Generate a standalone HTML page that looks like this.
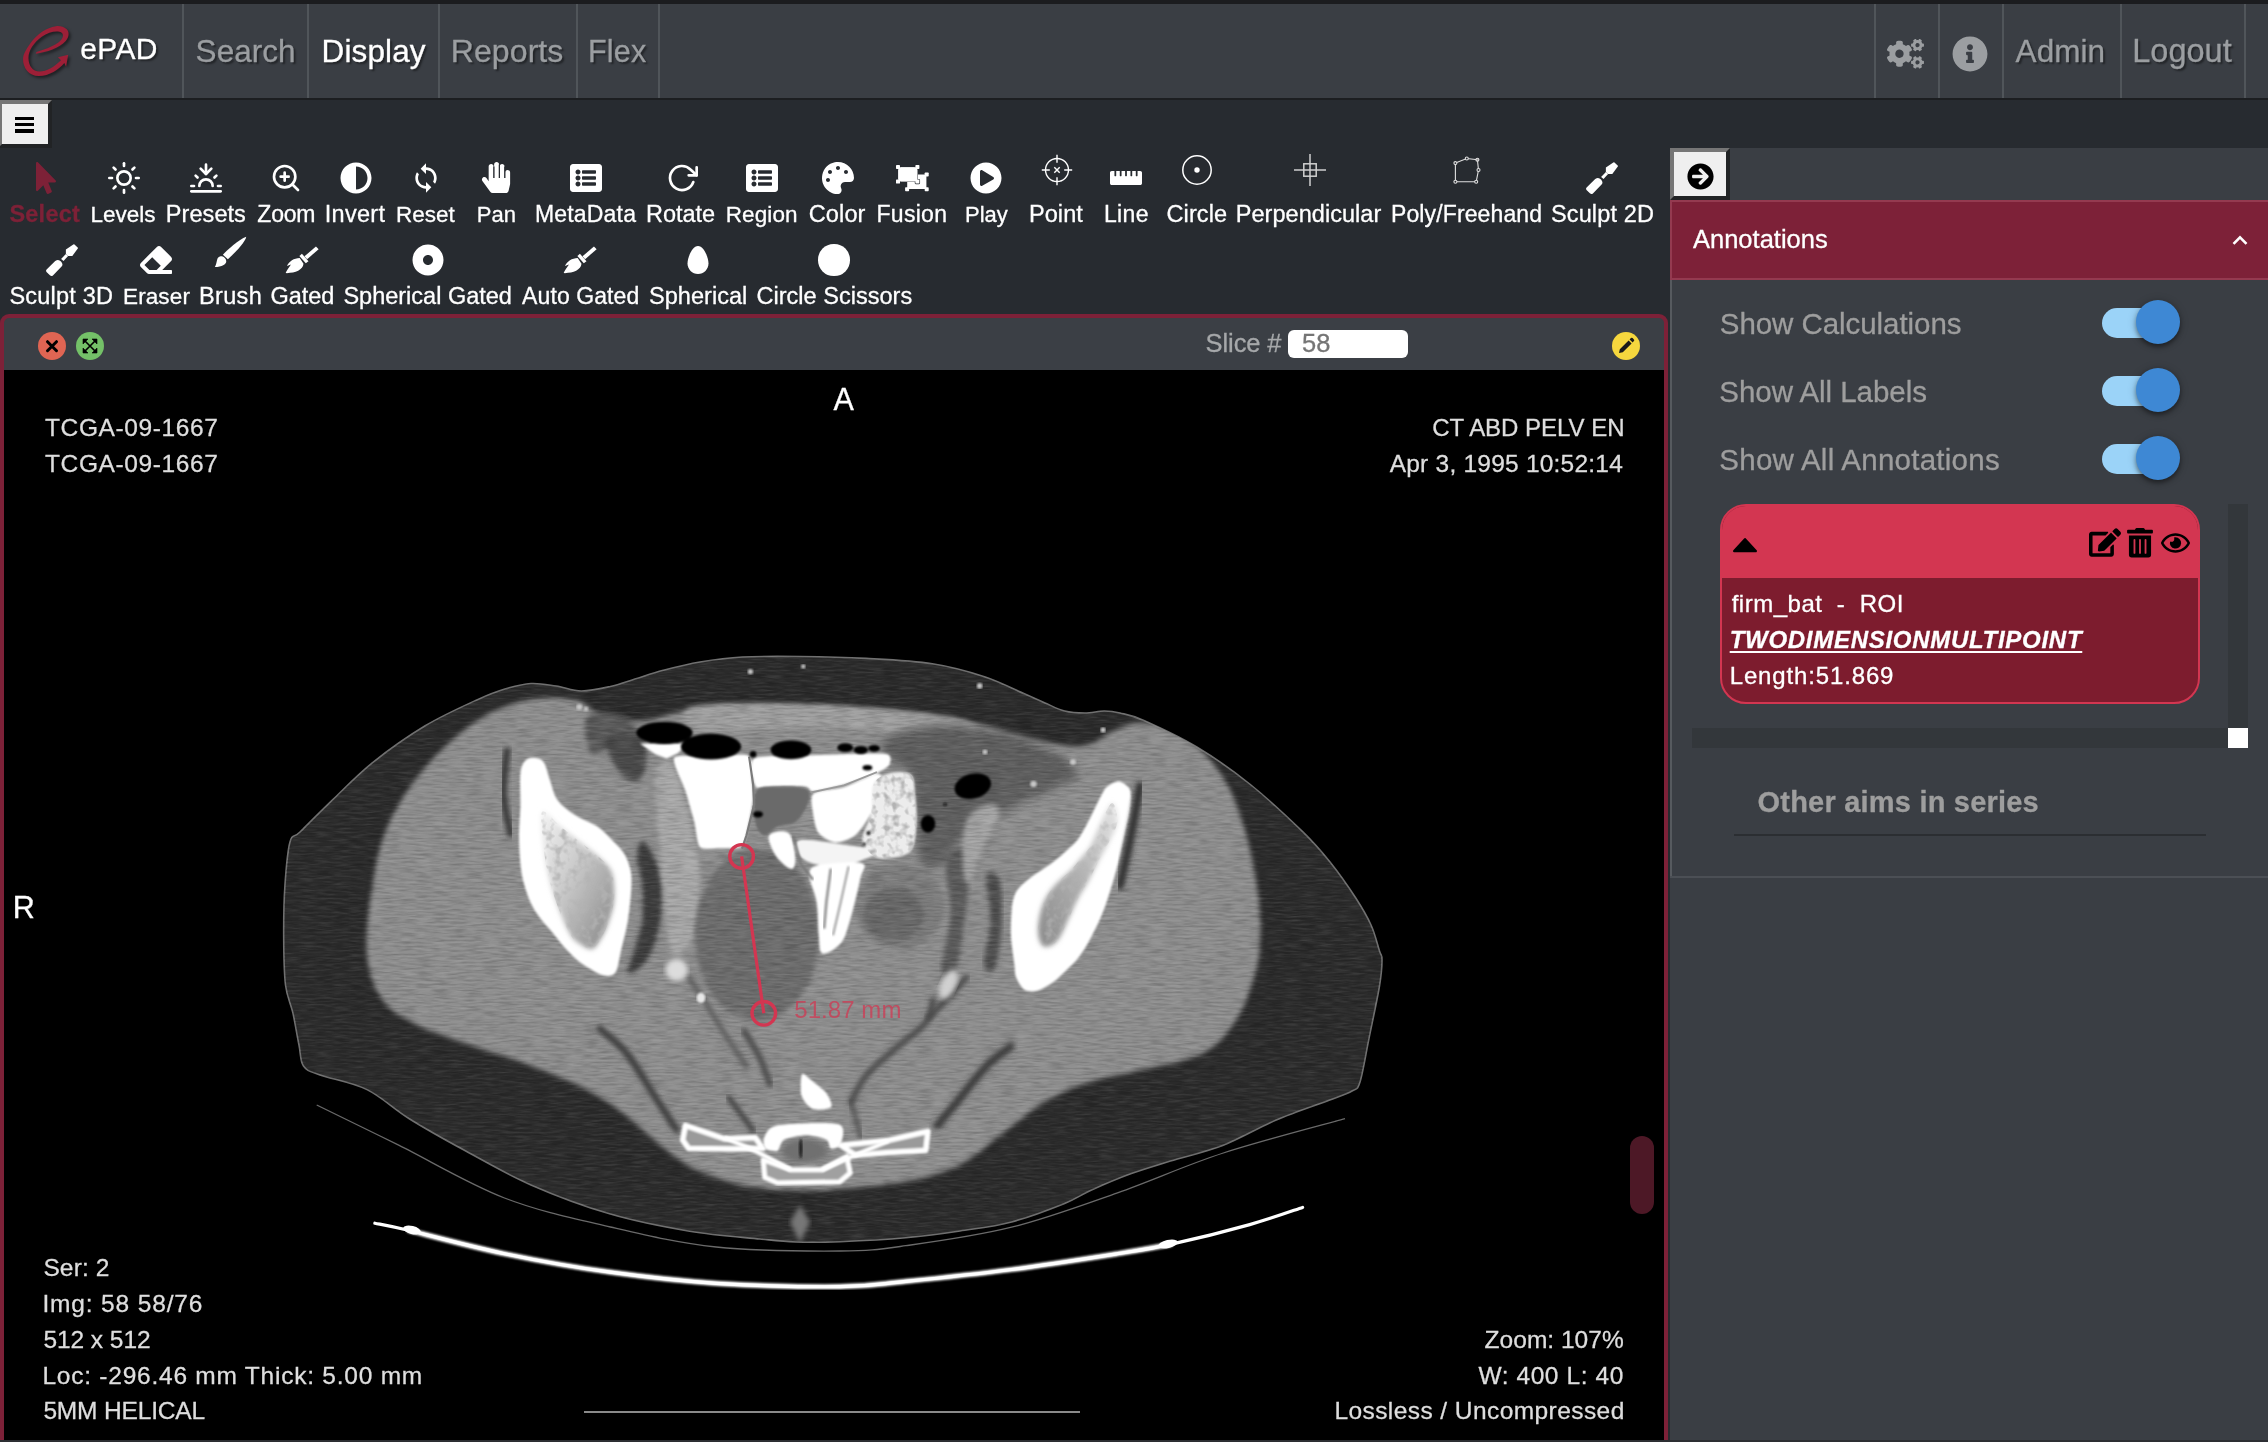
<!DOCTYPE html>
<html lang="en">
<head>
<meta charset="utf-8">
<title>ePAD</title>
<style>
html,body{margin:0;padding:0;}
body{width:2268px;height:1442px;overflow:hidden;position:relative;background:#272b30;font-family:"Liberation Sans",sans-serif;}
.a{position:absolute;}
.t{position:absolute;white-space:pre;line-height:1;-webkit-text-stroke:.3px;}
#tx{position:absolute;left:0;top:0;width:2268px;height:1442px;will-change:transform;}
.sh{text-shadow:2px 2px 2px rgba(0,0,0,.45);}
.ul{text-decoration:underline;text-decoration-thickness:2px;text-underline-offset:3px;}
.ann{opacity:.72;-webkit-text-stroke:0;}
svg{position:absolute;overflow:visible;}
.div{position:absolute;top:4px;height:94px;width:2px;background:#50555a;}
</style>
</head>

<body>
<!-- top strip + navbar -->
<div class="a" style="left:0;top:0;width:2268px;height:4px;background:#1b1c1f"></div>
<div class="a" style="left:0;top:4px;width:2268px;height:94px;background:#3a3e44"></div>
<div class="a" style="left:0;top:98px;width:2268px;height:2px;background:#1c1e21"></div>
<div class="div" style="left:182px"></div>
<div class="div" style="left:307px"></div>
<div class="div" style="left:438px"></div>
<div class="div" style="left:576px"></div>
<div class="div" style="left:658px"></div>
<div class="div" style="left:1874px"></div>
<div class="div" style="left:1938px"></div>
<div class="div" style="left:2002px"></div>
<div class="div" style="left:2120px"></div>
<div class="div" style="left:2244px"></div>
<!-- hamburger button -->
<div class="a" style="left:-2px;top:100px;width:46px;height:40px;background:#efefef;border:4px solid;border-color:#767676 #212325 #212325 #767676"></div>
<div class="a" style="left:15px;top:117px;width:19px;height:3.4px;background:#000"></div>
<div class="a" style="left:15px;top:123px;width:19px;height:3.4px;background:#000"></div>
<div class="a" style="left:15px;top:129.2px;width:19px;height:3.4px;background:#000"></div>
<!-- viewport frame -->
<div class="a" style="left:0;top:314px;width:1668px;height:1126px;background:#7d2138;border-radius:9px 9px 0 0"></div>
<div class="a" style="left:4px;top:318px;width:1660px;height:52px;background:#3b3f45;border-radius:5px 5px 0 0"></div>
<div class="a" style="left:4px;top:370px;width:1660px;height:1070px;background:#000"></div>

<!-- header buttons -->
<div class="a" style="left:38px;top:332px;width:28px;height:28px;border-radius:50%;background:#e06553"></div>
<svg style="left:38px;top:332px" width="28" height="28" viewBox="0 0 28 28"><path d="M9.500 9.700 L18.500 18.700 M18.500 9.700 L9.500 18.700" stroke="#000" stroke-width="3" stroke-linecap="round" fill="none"/></svg>
<div class="a" style="left:76px;top:332px;width:28px;height:28px;border-radius:50%;background:#74c168"></div>
<svg style="left:76px;top:332px" width="28" height="28" viewBox="0 0 28 28"><path d="M8 8 L20 20 M20 8 L8 20" stroke="#000" stroke-width="1.6" fill="none"/><path d="M7 7h5l-5 5z M21 7v5l-5-5z M7 21v-5l5 5z M21 21h-5l5-5z" fill="#000" stroke="#000" stroke-width=".6" stroke-linejoin="round"/></svg>
<!-- slice input -->
<div class="a" style="left:1288px;top:330px;width:120px;height:28px;background:#fff;border-radius:6px"></div>
<!-- pencil -->
<div class="a" style="left:1612px;top:332px;width:28px;height:28px;border-radius:50%;background:#f6d73e"></div>
<svg style="left:1612px;top:332px" width="28" height="28" viewBox="0 0 28 28"><path d="M7 21 L7.8 17.2 L16.6 8.4 L19.6 11.4 L10.8 20.2 Z M17.6 7.4 L18.9 6.1 a1.2 1.2 0 0 1 1.7 0 L21.9 7.4 a1.2 1.2 0 0 1 0 1.7 L20.6 10.4 Z" fill="#1a1a1a"/></svg>
<!-- viewport scrollbar thumb -->
<div class="a" style="left:1630px;top:1136px;width:24px;height:78px;border-radius:12px;background:#4d1826"></div>

<!-- CT image -->
<svg style="left:4px;top:370px" width="1660" height="1069" viewBox="4 370 1660 1069">
<defs>
<filter id="b1" x="-5%" y="-5%" width="110%" height="110%"><feGaussianBlur stdDeviation="1.2"/></filter>
<filter id="b2" x="-10%" y="-10%" width="120%" height="120%"><feGaussianBlur stdDeviation="2.5"/></filter>
<filter id="b4" x="-20%" y="-20%" width="140%" height="140%"><feGaussianBlur stdDeviation="5"/></filter>
<filter id="b8" x="-30%" y="-30%" width="160%" height="160%"><feGaussianBlur stdDeviation="9"/></filter>
<filter id="nz" x="0" y="0" width="100%" height="100%"><feTurbulence type="fractalNoise" baseFrequency="0.06 0.5" numOctaves="2" seed="7" result="n"/><feColorMatrix in="n" type="matrix" values="0 0 0 0 1  0 0 0 0 1  0 0 0 0 1  1.6 0 0 0 -0.62"/></filter>
<filter id="nzd" x="0" y="0" width="100%" height="100%"><feTurbulence type="fractalNoise" baseFrequency="0.06 0.5" numOctaves="2" seed="23" result="n"/><feColorMatrix in="n" type="matrix" values="0 0 0 0 0  0 0 0 0 0  0 0 0 0 0  1.6 0 0 0 -0.62"/></filter>
<filter id="spk" x="0" y="0" width="100%" height="100%"><feTurbulence type="fractalNoise" baseFrequency="0.13 0.13" numOctaves="2" seed="3" result="n"/><feColorMatrix in="n" type="matrix" values="0 0 0 0 0.45  0 0 0 0 0.45  0 0 0 0 0.45  3.2 0 0 0 -1.45"/></filter>
<clipPath id="cb"><path d="M800.0,656.5C779.4,656.3 759.3,656.1 742.6,657.0C725.9,657.9 713.2,659.8 700.0,662.0C686.8,664.2 674.1,667.5 663.3,670.3C652.5,673.1 643.8,676.3 635.0,679.0C626.2,681.7 619.4,684.5 610.4,686.5C601.4,688.5 590.4,691.1 581.3,691.0C572.2,690.9 564.4,687.2 556.0,686.0C547.6,684.8 539.5,683.0 531.0,683.5C522.5,684.0 513.8,686.4 505.0,689.0C496.2,691.6 491.3,693.3 478.0,699.4C464.7,705.5 442.8,715.2 425.2,725.8C407.6,736.4 387.7,750.5 372.3,762.9C356.9,775.2 344.7,788.4 332.6,799.9C320.6,811.4 307.1,825.0 300.0,832.0C292.9,839.0 292.5,833.2 290.0,842.0C287.5,850.8 286.1,868.7 285.0,884.6C283.9,900.5 283.6,920.8 283.7,937.5C283.8,954.2 284.0,972.4 285.5,985.0C287.0,997.6 290.6,1002.9 292.9,1012.9C295.1,1022.9 297.2,1036.2 299.0,1045.0C300.8,1053.8 300.0,1061.0 303.5,1066.0C307.0,1071.0 309.4,1071.1 320.0,1075.0C330.6,1078.9 352.1,1082.3 367.0,1089.6C381.9,1096.9 393.0,1108.5 409.3,1118.7C425.6,1128.9 444.6,1139.5 464.9,1150.5C485.2,1161.5 506.8,1174.3 531.0,1184.9C555.2,1195.5 583.9,1206.3 610.4,1214.0C636.9,1221.7 664.8,1227.0 689.7,1231.2C714.6,1235.4 742.4,1237.2 760.0,1239.0C777.6,1240.8 782.3,1241.5 795.6,1242.0C808.9,1242.5 821.6,1242.4 840.0,1241.7C858.4,1241.0 885.8,1239.6 905.8,1237.8C925.8,1236.0 942.4,1233.7 960.0,1231.0C977.6,1228.3 994.2,1226.5 1011.6,1221.9C1029.0,1217.3 1051.4,1208.7 1064.6,1203.4C1077.8,1198.1 1080.1,1195.1 1091.0,1190.2C1101.9,1185.3 1116.8,1178.8 1130.0,1174.0C1143.2,1169.2 1154.9,1165.9 1170.4,1161.1C1186.0,1156.3 1205.7,1152.0 1223.3,1145.2C1240.9,1138.4 1258.6,1127.5 1276.2,1120.0C1293.8,1112.5 1316.5,1105.0 1329.1,1100.2C1341.7,1095.4 1346.8,1094.0 1352.0,1091.0C1357.2,1088.0 1357.2,1090.6 1360.0,1082.0C1362.8,1073.4 1365.6,1055.3 1368.8,1039.4C1372.0,1023.5 1377.2,999.7 1379.4,986.5C1381.6,973.3 1382.0,966.0 1382.0,960.0C1382.0,954.0 1381.2,956.5 1379.4,950.7C1377.6,944.9 1375.0,933.8 1371.0,925.0C1367.0,916.2 1362.4,908.3 1355.6,897.8C1348.8,887.3 1338.8,873.0 1330.0,862.0C1321.2,851.0 1316.0,844.6 1302.6,831.6C1289.2,818.6 1267.3,798.1 1249.7,784.0C1232.1,769.9 1214.4,757.6 1196.8,747.0C1179.2,736.4 1156.7,726.2 1143.9,720.5C1131.1,714.8 1126.6,714.6 1120.0,713.0C1113.4,711.4 1110.0,711.0 1104.2,711.0C1098.4,711.0 1091.6,713.0 1085.0,713.0C1078.4,713.0 1071.3,712.7 1064.6,711.0C1057.9,709.3 1051.6,705.8 1045.0,703.0C1038.4,700.2 1034.9,698.5 1024.9,694.1C1014.9,689.8 1000.6,682.0 985.2,676.9C969.8,671.8 952.1,666.8 932.3,663.7C912.4,660.6 888.1,659.6 866.1,658.4C844.1,657.2 820.6,656.7 800.0,656.5Z"/></clipPath>
<clipPath id="cli"><path d="M542.0,812.0C544.7,808.0 553.0,820.5 560.0,826.0C567.0,831.5 577.2,839.6 583.9,844.9C590.6,850.2 595.3,853.3 600.0,858.0C604.7,862.7 609.7,866.0 612.0,873.0C614.3,880.0 614.7,891.5 614.0,900.0C613.3,908.5 610.0,917.5 607.7,924.2C605.4,930.9 602.6,935.9 600.0,940.0C597.4,944.1 595.3,948.3 592.0,949.0C588.7,949.7 583.7,946.5 580.0,944.0C576.3,941.5 573.8,940.4 570.0,934.0C566.2,927.6 560.9,914.7 557.5,905.7C554.1,896.7 551.8,889.3 549.5,880.0C547.2,870.7 545.2,861.3 544.0,850.0C542.8,838.7 539.3,816.0 542.0,812.0Z"/></clipPath>
<clipPath id="cri"><path d="M1112.2,803.0C1115.0,802.8 1117.9,814.8 1117.5,821.0C1117.1,827.2 1113.1,833.5 1110.0,840.0C1106.9,846.5 1102.5,853.3 1099.0,860.0C1095.5,866.7 1092.5,873.5 1089.0,880.0C1085.5,886.5 1081.3,892.3 1077.8,899.0C1074.3,905.7 1071.1,913.5 1068.0,920.0C1064.9,926.5 1062.3,933.7 1059.3,938.0C1056.3,942.3 1052.9,944.8 1050.0,946.0C1047.1,947.2 1044.0,947.3 1042.0,945.0C1040.0,942.7 1038.4,937.4 1038.1,932.2C1037.8,927.0 1038.7,919.7 1040.0,914.0C1041.3,908.3 1043.3,902.8 1046.0,897.8C1048.7,892.8 1052.0,888.4 1056.0,884.0C1060.0,879.6 1065.6,875.6 1069.8,871.3C1074.0,867.0 1077.5,862.4 1081.0,858.0C1084.5,853.6 1087.7,850.9 1091.0,844.9C1094.3,838.9 1097.5,829.0 1101.0,822.0C1104.5,815.0 1109.5,803.2 1112.2,803.0Z"/></clipPath>
<linearGradient id="gml" x1="0" y1="0" x2="1" y2="1"><stop offset="0" stop-color="#f4f4f4"/><stop offset=".45" stop-color="#c8c8c8"/><stop offset="1" stop-color="#858585"/></linearGradient>
<linearGradient id="gmr" x1="1" y1="0" x2="0" y2="1"><stop offset="0" stop-color="#e8e8e8"/><stop offset=".5" stop-color="#b0b0b0"/><stop offset="1" stop-color="#8a8a8a"/></linearGradient>
</defs>
<path d="M800.0,656.5C779.4,656.3 759.3,656.1 742.6,657.0C725.9,657.9 713.2,659.8 700.0,662.0C686.8,664.2 674.1,667.5 663.3,670.3C652.5,673.1 643.8,676.3 635.0,679.0C626.2,681.7 619.4,684.5 610.4,686.5C601.4,688.5 590.4,691.1 581.3,691.0C572.2,690.9 564.4,687.2 556.0,686.0C547.6,684.8 539.5,683.0 531.0,683.5C522.5,684.0 513.8,686.4 505.0,689.0C496.2,691.6 491.3,693.3 478.0,699.4C464.7,705.5 442.8,715.2 425.2,725.8C407.6,736.4 387.7,750.5 372.3,762.9C356.9,775.2 344.7,788.4 332.6,799.9C320.6,811.4 307.1,825.0 300.0,832.0C292.9,839.0 292.5,833.2 290.0,842.0C287.5,850.8 286.1,868.7 285.0,884.6C283.9,900.5 283.6,920.8 283.7,937.5C283.8,954.2 284.0,972.4 285.5,985.0C287.0,997.6 290.6,1002.9 292.9,1012.9C295.1,1022.9 297.2,1036.2 299.0,1045.0C300.8,1053.8 300.0,1061.0 303.5,1066.0C307.0,1071.0 309.4,1071.1 320.0,1075.0C330.6,1078.9 352.1,1082.3 367.0,1089.6C381.9,1096.9 393.0,1108.5 409.3,1118.7C425.6,1128.9 444.6,1139.5 464.9,1150.5C485.2,1161.5 506.8,1174.3 531.0,1184.9C555.2,1195.5 583.9,1206.3 610.4,1214.0C636.9,1221.7 664.8,1227.0 689.7,1231.2C714.6,1235.4 742.4,1237.2 760.0,1239.0C777.6,1240.8 782.3,1241.5 795.6,1242.0C808.9,1242.5 821.6,1242.4 840.0,1241.7C858.4,1241.0 885.8,1239.6 905.8,1237.8C925.8,1236.0 942.4,1233.7 960.0,1231.0C977.6,1228.3 994.2,1226.5 1011.6,1221.9C1029.0,1217.3 1051.4,1208.7 1064.6,1203.4C1077.8,1198.1 1080.1,1195.1 1091.0,1190.2C1101.9,1185.3 1116.8,1178.8 1130.0,1174.0C1143.2,1169.2 1154.9,1165.9 1170.4,1161.1C1186.0,1156.3 1205.7,1152.0 1223.3,1145.2C1240.9,1138.4 1258.6,1127.5 1276.2,1120.0C1293.8,1112.5 1316.5,1105.0 1329.1,1100.2C1341.7,1095.4 1346.8,1094.0 1352.0,1091.0C1357.2,1088.0 1357.2,1090.6 1360.0,1082.0C1362.8,1073.4 1365.6,1055.3 1368.8,1039.4C1372.0,1023.5 1377.2,999.7 1379.4,986.5C1381.6,973.3 1382.0,966.0 1382.0,960.0C1382.0,954.0 1381.2,956.5 1379.4,950.7C1377.6,944.9 1375.0,933.8 1371.0,925.0C1367.0,916.2 1362.4,908.3 1355.6,897.8C1348.8,887.3 1338.8,873.0 1330.0,862.0C1321.2,851.0 1316.0,844.6 1302.6,831.6C1289.2,818.6 1267.3,798.1 1249.7,784.0C1232.1,769.9 1214.4,757.6 1196.8,747.0C1179.2,736.4 1156.7,726.2 1143.9,720.5C1131.1,714.8 1126.6,714.6 1120.0,713.0C1113.4,711.4 1110.0,711.0 1104.2,711.0C1098.4,711.0 1091.6,713.0 1085.0,713.0C1078.4,713.0 1071.3,712.7 1064.6,711.0C1057.9,709.3 1051.6,705.8 1045.0,703.0C1038.4,700.2 1034.9,698.5 1024.9,694.1C1014.9,689.8 1000.6,682.0 985.2,676.9C969.8,671.8 952.1,666.8 932.3,663.7C912.4,660.6 888.1,659.6 866.1,658.4C844.1,657.2 820.6,656.7 800.0,656.5Z" fill="#2a2a2a" stroke="#707070" stroke-width="1.6"/>
<g clip-path="url(#cb)">
<path d="M366.6,951.6C365.4,932.3 369.9,901.4 373.1,881.3C376.3,861.2 379.4,846.9 385.7,831.0C392.0,815.1 400.8,800.0 410.8,785.8C420.9,771.6 433.4,757.3 446.0,745.6C458.6,733.9 472.0,723.1 486.2,715.4C500.4,707.7 516.3,701.8 531.4,699.3C546.5,696.8 565.0,697.6 576.7,700.3C588.4,703.0 590.9,712.0 601.8,715.4C612.7,718.8 626.1,721.6 642.0,720.4C657.9,719.1 677.2,710.6 697.3,707.9C717.4,705.2 735.0,704.3 762.6,704.3C790.2,704.3 829.7,705.2 863.2,707.9C896.7,710.6 934.4,715.0 963.7,720.4C993.0,725.8 1019.0,736.3 1039.1,740.5C1059.2,744.7 1071.7,747.3 1084.3,745.6C1096.9,743.9 1104.5,734.3 1114.5,730.5C1124.5,726.7 1132.0,721.2 1144.6,722.9C1157.2,724.6 1176.5,730.9 1189.9,740.5C1203.3,750.1 1215.9,765.6 1225.1,780.7C1234.3,795.8 1239.8,812.6 1245.2,831.0C1250.6,849.4 1255.2,872.9 1257.7,891.3C1260.2,909.7 1261.0,926.5 1260.2,941.6C1259.4,956.7 1256.9,968.4 1252.7,981.8C1248.5,995.2 1243.0,1010.3 1235.1,1022.0C1227.1,1033.7 1218.4,1044.7 1205.0,1052.2C1191.6,1059.8 1174.0,1062.3 1154.7,1067.3C1135.4,1072.3 1107.7,1076.4 1089.3,1082.3C1070.9,1088.2 1058.3,1094.0 1044.1,1102.4C1029.9,1110.8 1017.3,1122.5 1003.9,1132.6C990.5,1142.6 978.8,1154.8 963.7,1162.7C948.6,1170.7 931.8,1176.1 913.4,1180.3C895.0,1184.5 872.4,1186.2 853.1,1187.9C833.8,1189.6 816.2,1190.8 797.8,1190.4C779.4,1190.0 760.1,1189.2 742.5,1185.4C724.9,1181.6 706.5,1174.9 692.3,1167.8C678.1,1160.7 668.8,1151.8 657.1,1142.6C645.4,1133.4 634.5,1121.7 621.9,1112.5C609.3,1103.3 598.5,1095.7 581.7,1087.3C565.0,1078.9 541.5,1069.7 521.4,1062.2C501.3,1054.7 479.4,1048.8 461.0,1042.1C442.6,1035.4 424.2,1029.5 410.8,1022.0C397.4,1014.5 388.0,1008.6 380.6,996.9C373.2,985.2 367.9,970.9 366.6,951.6Z" fill="#8f8f8f" filter="url(#b2)"/>
<path d="M690.0,708.0C700.0,703.5 731.2,704.0 760.0,704.0C788.8,704.0 828.8,705.2 863.0,708.0C897.2,710.8 947.5,715.0 965.0,721.0C982.5,727.0 978.8,742.2 968.0,744.0C957.2,745.8 928.0,734.8 900.0,732.0C872.0,729.2 833.3,727.2 800.0,727.0C766.7,726.8 718.3,734.2 700.0,731.0C681.7,727.8 680.0,712.5 690.0,708.0Z" fill="#a0a0a0" filter="url(#b2)"/>
<path d="M886.3,738.8C894.1,733.6 914.0,726.6 932.9,725.5C951.8,724.4 979.1,727.5 999.5,732.2C1019.8,736.8 1042.0,746.0 1054.9,753.2C1067.9,760.4 1080.8,768.0 1077.1,775.4C1073.4,782.8 1047.6,790.2 1032.8,797.6C1018.0,805.0 1000.6,812.8 988.4,819.8C976.2,826.8 966.5,832.8 959.5,839.8C952.5,846.8 952.5,857.9 946.2,862.0C939.9,866.0 927.0,872.3 921.8,864.2C916.6,856.1 917.0,828.0 915.1,813.2C913.3,798.4 915.5,784.9 910.7,775.4C905.9,766.0 890.4,762.7 886.3,756.6C882.2,750.5 878.5,744.0 886.3,738.8Z" fill="#5e5e5e" filter="url(#b4)"/>
<path d="M586.7,717.7C590.4,711.1 604.4,711.1 613.3,713.3C622.2,715.5 635.9,725.5 639.9,731.0C644.0,736.6 642.2,744.0 637.7,746.6C633.3,749.2 621.1,745.5 613.3,746.6C605.5,747.7 595.6,758.0 591.1,753.2C586.7,748.4 583.0,724.4 586.7,717.7Z" fill="#5a5a5a" filter="url(#b2)"/>
<path d="M642.3,841.0C645.0,840.7 649.8,848.2 653.1,855.4C656.4,862.6 660.9,873.5 662.1,884.3C663.3,895.1 661.8,909.8 660.3,920.3C658.8,930.8 656.1,939.9 653.1,947.4C650.1,954.9 646.5,961.2 642.3,965.4C638.1,969.6 629.1,975.6 627.9,972.6C626.7,969.6 632.7,956.1 635.1,947.4C637.5,938.7 641.1,930.8 642.3,920.3C643.5,909.8 643.2,894.8 642.3,884.3C641.4,873.8 636.9,864.4 636.9,857.2C636.9,850.0 639.6,841.3 642.3,841.0Z" fill="#3a3a3a" filter="url(#b2)"/>
<path d="M606.2,738.0C610.4,732.9 635.7,733.2 642.3,738.0C648.9,742.8 647.1,759.8 645.9,767.0C644.7,774.2 639.9,781.2 635.1,781.5C630.3,781.8 621.8,776.1 617.0,768.9C612.2,761.6 602.0,743.1 606.2,738.0Z" fill="#4a4a4a" filter="url(#b2)"/>
<path d="M655.5,773.2C657.9,761.7 666.9,756.2 673.2,766.6C679.5,776.9 688.8,816.5 693.2,835.3C697.6,854.2 699.9,863.1 699.9,879.7C699.9,896.4 697.6,923.0 693.2,935.2C688.8,947.4 678.0,958.5 673.2,953.0C668.4,947.4 666.8,921.5 664.4,901.9C662.0,882.3 660.3,856.8 658.8,835.3C657.3,813.9 653.1,784.7 655.5,773.2Z" fill="#a9a9a9" filter="url(#b2)"/>
<path d="M946.2,862.0C948.4,851.3 960.3,845.7 964.0,848.7C967.7,851.6 968.4,867.2 968.4,879.7C968.4,892.3 966.2,908.6 964.0,924.1C961.7,939.7 958.8,965.5 955.1,972.9C951.4,980.3 942.5,978.5 941.8,968.5C941.0,958.5 949.9,930.8 950.6,913.0C951.4,895.3 944.0,872.7 946.2,862.0Z" fill="#5a5a5a" filter="url(#b2)"/>
<path d="M986.2,875.3C987.6,868.6 996.9,871.6 999.5,879.7C1002.1,887.9 1002.4,909.3 1001.7,924.1C1000.9,938.9 998.0,961.8 995.0,968.5C992.1,975.2 984.7,972.2 983.9,964.1C983.2,955.9 990.2,934.5 990.6,919.7C991.0,904.9 984.7,882.0 986.2,875.3Z" fill="#4e4e4e" filter="url(#b2)"/>
<path d="M966.2,822.0C970.2,810.2 982.8,805.8 988.4,804.3C993.9,802.8 1000.6,805.8 999.5,813.2C998.4,820.6 986.2,837.6 981.7,848.7C977.3,859.8 975.8,875.3 972.8,879.7C969.9,884.2 965.1,884.9 964.0,875.3C962.8,865.7 962.1,833.9 966.2,822.0Z" fill="#a5a5a5" filter="url(#b2)"/>
<ellipse cx="757" cy="935" rx="62" ry="86" fill="#6d6d6d" filter="url(#b2)"/>
<ellipse cx="899.6" cy="906.4" rx="45" ry="43" fill="#7e7e7e" filter="url(#b2)"/>
<ellipse cx="893.6" cy="914.4" rx="30" ry="27" fill="#696969" filter="url(#b2)"/>
<rect x="280" y="650" width="1110" height="600" filter="url(#nz)" opacity=".13"/>
<rect x="280" y="650" width="1110" height="600" filter="url(#nzd)" opacity=".22"/>
<circle cx="750.4" cy="671.7" r="2.6" fill="#c8c8c8" filter="url(#b1)"/>
<circle cx="803.3" cy="666.5" r="2.2" fill="#c8c8c8" filter="url(#b1)"/>
<circle cx="979.7" cy="685.9" r="2.8" fill="#c8c8c8" filter="url(#b1)"/>
<circle cx="1103.1" cy="729.9" r="2.6" fill="#c8c8c8" filter="url(#b1)"/>
<circle cx="579.3" cy="707" r="3" fill="#c8c8c8" filter="url(#b1)"/>
<circle cx="586" cy="709" r="2.2" fill="#c8c8c8" filter="url(#b1)"/>
<circle cx="1073" cy="762" r="3" fill="#c8c8c8" filter="url(#b1)"/>
<circle cx="1033.5" cy="784" r="3.2" fill="#c8c8c8" filter="url(#b1)"/>
<circle cx="985" cy="752" r="2.5" fill="#c8c8c8" filter="url(#b1)"/>
<g filter="url(#b1)">
<path d="M639.9,743.5L687.7,743.5L677.7,753.2L666.6,758.6L655.5,754.3Z" fill="#fff"/>
<path d="M674.3,757.7C677.3,753.7 702.3,757.0 711.0,756.8C719.6,756.5 743.5,752.8 748.2,755.5C753.0,758.1 751.4,774.7 752.0,779.9C752.6,785.0 753.6,794.4 753.1,799.8C752.7,805.3 749.5,821.0 748.2,826.5C747.0,831.9 745.3,843.9 742.0,846.4C738.7,849.0 724.8,848.2 719.8,848.2C714.9,848.3 702.8,849.9 699.9,846.9C696.9,843.8 696.0,828.6 694.3,822.0C692.6,815.5 687.8,798.5 685.4,791.0C683.1,783.5 671.4,761.7 674.3,757.7Z" fill="#fff"/>
<path d="M754.7,758.1C761.3,754.9 808.8,755.4 821.9,755.0C835.1,754.6 879.6,752.9 886.3,753.9C893.0,754.9 890.1,763.5 888.9,765.4C887.8,767.4 879.7,771.7 875.2,773.7C870.7,775.6 850.3,783.0 844.1,784.7C837.9,786.5 816.8,791.2 813.0,791.4C809.3,791.6 809.9,787.5 806.4,787.0C802.8,786.4 782.6,786.1 777.5,786.1C772.5,786.1 758.1,789.8 755.8,787.0C753.5,784.2 748.1,761.3 754.7,758.1Z" fill="#fff"/>
<path d="M813.5,793.6C817.6,790.1 835.6,789.6 844.1,787.0C852.6,784.3 872.3,774.0 877.4,773.7C882.5,773.3 883.1,779.0 882.3,784.3C881.5,789.6 874.8,806.4 871.2,813.2C867.6,820.0 860.0,831.4 855.2,835.3C850.4,839.3 840.1,842.7 835.2,842.5C830.4,842.2 821.6,837.0 818.6,833.1C815.6,829.2 813.7,818.4 813.0,813.2C812.4,807.9 809.4,797.1 813.5,793.6Z" fill="#fff"/>
<path d="M873.4,784.3C876.3,777.7 882.3,775.3 888.5,773.7C894.7,772.0 906.3,770.9 910.7,774.5C915.1,778.2 914.2,787.1 915.1,795.4C916.1,803.7 917.2,815.0 916.5,824.3C915.7,833.5 915.4,845.3 910.7,850.9C906.0,856.5 894.7,857.2 888.5,858.0C882.3,858.8 877.8,858.8 873.4,855.8C869.0,852.7 862.7,846.9 862.3,839.8C861.9,832.7 869.3,822.4 871.2,813.2C873.0,803.9 870.5,790.9 873.4,784.3Z" fill="#ececec"/>
<path d="M769.1,835.3C771.3,831.6 784.3,829.4 788.6,833.1C793.0,836.8 794.9,851.5 795.3,857.5C795.7,863.5 794.6,869.4 791.3,869.1C788.0,868.8 779.5,861.4 775.8,855.8C772.1,850.1 767.0,839.1 769.1,835.3Z" fill="#fff"/>
<path d="M799.7,840.2C807.1,838.4 831.2,842.9 844.1,844.7C857.1,846.4 874.4,848.3 877.4,850.9C880.4,853.5 867.4,857.9 861.9,860.2C856.3,862.5 851.5,863.9 844.1,864.6C836.7,865.4 824.9,866.1 817.5,864.6C810.1,863.2 802.7,859.8 799.7,855.8C796.8,851.7 792.3,842.1 799.7,840.2Z" fill="#f4f4f4"/>
<path d="M809.1,873.5C809.9,867.3 813.1,866.3 821.9,864.6C830.7,862.9 855.5,860.8 861.9,863.3C868.2,865.8 862.2,869.6 860.1,879.7C858.0,889.9 852.3,913.4 849.0,924.1C845.7,934.8 844.6,939.2 840.1,944.1C835.7,949.0 825.9,954.9 822.4,953.4C818.8,951.9 819.8,943.8 818.8,935.2C817.9,926.6 818.2,912.2 816.6,901.9C815.0,891.6 808.2,879.7 809.1,873.5Z" fill="#fff"/>
</g>
<clipPath id="cb4"><path d="M873.4,784.3C876.3,777.7 882.3,775.3 888.5,773.7C894.7,772.0 906.3,770.9 910.7,774.5C915.1,778.2 914.2,787.1 915.1,795.4C916.1,803.7 917.2,815.0 916.5,824.3C915.7,833.5 915.4,845.3 910.7,850.9C906.0,856.5 894.7,857.2 888.5,858.0C882.3,858.8 877.8,858.8 873.4,855.8C869.0,852.7 862.7,846.9 862.3,839.8C861.9,832.7 869.3,822.4 871.2,813.2C873.0,803.9 870.5,790.9 873.4,784.3Z"/></clipPath>
<g clip-path="url(#cb4)"><rect x="860" y="760" width="70" height="110" filter="url(#spk)"/></g>
<path d="M756.5,791.0C760.2,785.1 769.2,787.3 777.5,787.0C785.9,786.7 801.4,786.3 806.4,789.2C811.4,792.1 809.4,798.8 807.5,804.3C805.7,809.8 800.3,818.3 795.3,822.0C790.3,825.7 782.7,824.3 777.5,826.5C772.4,828.7 767.9,836.1 764.2,835.3C760.5,834.6 756.6,829.4 755.3,822.0C754.1,814.6 752.8,796.8 756.5,791.0Z" fill="#6a6a6a" filter="url(#b1)"/>
<path d="M810.8,792.5L844.1,785.4L877.0,772.1" fill="none" stroke="#9a9a9a" stroke-width="2"/>
<path d="M749.1,756.6L753.1,784.3L754.2,804.3L746.5,835.3L742.0,848.7" fill="none" stroke="#7a7a7a" stroke-width="2.2"/>
<path d="M830.8,868.6L826.4,901.9L824.1,928.6" fill="none" stroke="#8a8a8a" stroke-width="2.5" filter="url(#b1)"/>
<path d="M848.6,866.4L840.8,901.9L833.0,935.2" fill="none" stroke="#9a9a9a" stroke-width="2" filter="url(#b1)"/>
<path d="M793.1,835.3L800.8,864.2L813.0,879.7" fill="none" stroke="#777" stroke-width="2.5" filter="url(#b1)"/>
<g filter="url(#b1)">
<ellipse cx="664.4" cy="732.8" rx="28.2" ry="11.1" fill="#000"/>
<ellipse cx="711.0" cy="746.6" rx="30.2" ry="12.9" fill="#000"/>
<ellipse cx="790.9" cy="749.9" rx="20.4" ry="9.3" fill="#000"/>
<ellipse cx="845.2" cy="747.7" rx="8.0" ry="4.4" fill="#000"/>
<ellipse cx="860.8" cy="749.9" rx="7.1" ry="4.0" fill="#000"/>
<ellipse cx="874.1" cy="748.4" rx="5.8" ry="3.3" fill="#000"/>
<ellipse cx="972.8" cy="786.1" rx="18.6" ry="12.4" fill="#000" transform="rotate(-15 972.8 786.1)"/>
<ellipse cx="928.0" cy="823.8" rx="7.3" ry="8.9" fill="#000"/>
<ellipse cx="753.1" cy="754.3" rx="3.3" ry="3.3" fill="#000"/>
<ellipse cx="758.0" cy="814.3" rx="4.9" ry="3.1" fill="#000"/>
<ellipse cx="867.4" cy="767.7" rx="4.9" ry="2.7" fill="#000"/>
<ellipse cx="945.1" cy="804.3" rx="1.6" ry="1.6" fill="#111"/>
<ellipse cx="868.5" cy="833.1" rx="2.2" ry="2.2" fill="#222"/>
<ellipse cx="864.1" cy="844.2" rx="1.8" ry="1.8" fill="#333"/>
</g>
<g filter="url(#b1)">
<path d="M525.7,760.2C528.3,757.6 532.9,757.5 536.0,758.0C539.1,758.5 541.9,759.2 544.2,762.9C546.5,766.6 547.8,773.8 550.0,780.0C552.2,786.2 553.3,794.1 557.5,799.9C561.7,805.7 568.4,810.6 575.0,815.0C581.6,819.4 590.9,822.1 597.1,826.3C603.3,830.5 607.6,835.6 612.0,840.0C616.4,844.4 620.6,848.1 623.6,852.8C626.6,857.5 628.7,862.7 630.0,868.0C631.3,873.3 631.8,875.9 631.5,884.6C631.2,893.3 629.8,909.0 628.0,920.0C626.2,931.0 623.0,942.1 621.0,950.7C619.0,959.4 618.4,967.7 615.7,971.9C613.1,976.1 609.1,976.1 605.1,975.8C601.1,975.5 596.4,972.4 592.0,970.0C587.6,967.6 583.1,965.0 578.6,961.3C574.1,957.6 569.4,952.9 565.0,948.0C560.6,943.1 556.4,937.2 552.2,932.2C548.0,927.2 543.5,922.8 540.0,918.0C536.5,913.2 533.7,909.1 531.0,903.4C528.3,897.7 525.8,890.6 524.0,884.0C522.2,877.4 521.2,871.9 520.4,863.7C519.6,855.5 519.0,844.8 519.0,835.0C519.0,825.2 520.2,815.5 520.4,805.2C520.6,794.9 519.5,780.9 520.4,773.4C521.3,765.9 523.1,762.8 525.7,760.2Z" fill="#fff"/>
<path d="M1117.5,781.4C1120.7,781.1 1123.8,783.2 1126.0,785.0C1128.2,786.8 1130.0,787.8 1130.7,792.0C1131.4,796.2 1130.9,803.4 1130.0,810.0C1129.1,816.6 1127.2,823.3 1125.4,831.6C1123.6,839.9 1121.2,851.2 1119.0,860.0C1116.8,868.8 1114.9,875.9 1112.2,884.6C1109.5,893.3 1106.5,903.2 1103.0,912.0C1099.5,920.8 1095.0,930.0 1091.0,937.5C1087.0,945.0 1083.4,951.3 1079.0,957.0C1074.6,962.7 1069.1,967.6 1064.6,971.9C1060.1,976.2 1056.4,979.9 1052.0,983.0C1047.6,986.1 1042.1,989.1 1038.1,990.4C1034.1,991.7 1030.7,991.5 1028.0,991.0C1025.3,990.5 1024.2,990.0 1022.2,987.7C1020.2,985.4 1017.3,981.0 1016.0,977.0C1014.7,973.0 1015.1,970.6 1014.3,963.9C1013.5,957.2 1011.5,945.8 1011.0,937.0C1010.5,928.2 1011.1,917.7 1011.6,911.0C1012.1,904.3 1012.7,901.0 1014.0,897.0C1015.3,893.0 1016.3,890.9 1019.6,887.2C1022.9,883.5 1028.7,879.0 1034.0,875.0C1039.3,871.0 1046.1,867.2 1051.3,863.4C1056.5,859.6 1060.6,856.0 1065.0,852.0C1069.4,848.0 1074.0,844.6 1077.8,839.6C1081.6,834.6 1084.9,827.7 1088.0,822.0C1091.1,816.3 1094.0,809.9 1096.3,805.2C1098.6,800.5 1100.2,797.1 1102.0,794.0C1103.8,790.9 1104.3,788.8 1106.9,786.7C1109.5,784.6 1114.3,781.7 1117.5,781.4Z" fill="#fff"/>
</g>
<path d="M542.0,812.0C544.7,808.0 553.0,820.5 560.0,826.0C567.0,831.5 577.2,839.6 583.9,844.9C590.6,850.2 595.3,853.3 600.0,858.0C604.7,862.7 609.7,866.0 612.0,873.0C614.3,880.0 614.7,891.5 614.0,900.0C613.3,908.5 610.0,917.5 607.7,924.2C605.4,930.9 602.6,935.9 600.0,940.0C597.4,944.1 595.3,948.3 592.0,949.0C588.7,949.7 583.7,946.5 580.0,944.0C576.3,941.5 573.8,940.4 570.0,934.0C566.2,927.6 560.9,914.7 557.5,905.7C554.1,896.7 551.8,889.3 549.5,880.0C547.2,870.7 545.2,861.3 544.0,850.0C542.8,838.7 539.3,816.0 542.0,812.0Z" fill="url(#gml)" filter="url(#b2)"/>
<path d="M1112.2,803.0C1115.0,802.8 1117.9,814.8 1117.5,821.0C1117.1,827.2 1113.1,833.5 1110.0,840.0C1106.9,846.5 1102.5,853.3 1099.0,860.0C1095.5,866.7 1092.5,873.5 1089.0,880.0C1085.5,886.5 1081.3,892.3 1077.8,899.0C1074.3,905.7 1071.1,913.5 1068.0,920.0C1064.9,926.5 1062.3,933.7 1059.3,938.0C1056.3,942.3 1052.9,944.8 1050.0,946.0C1047.1,947.2 1044.0,947.3 1042.0,945.0C1040.0,942.7 1038.4,937.4 1038.1,932.2C1037.8,927.0 1038.7,919.7 1040.0,914.0C1041.3,908.3 1043.3,902.8 1046.0,897.8C1048.7,892.8 1052.0,888.4 1056.0,884.0C1060.0,879.6 1065.6,875.6 1069.8,871.3C1074.0,867.0 1077.5,862.4 1081.0,858.0C1084.5,853.6 1087.7,850.9 1091.0,844.9C1094.3,838.9 1097.5,829.0 1101.0,822.0C1104.5,815.0 1109.5,803.2 1112.2,803.0Z" fill="url(#gmr)" filter="url(#b2)"/>
<g clip-path="url(#cli)"><rect x="530" y="800" width="100" height="160" filter="url(#spk)" opacity=".8"/></g>
<g clip-path="url(#cri)"><rect x="1030" y="795" width="100" height="160" filter="url(#spk)" opacity=".6"/></g>
<path d="M507.0,750.8C506.4,758.0 502.8,780.3 503.4,794.1C504.0,807.9 509.5,827.2 510.7,833.8" fill="none" stroke="#383838" stroke-width="7" stroke-linecap="round" filter="url(#b2)"/>
<path d="M1140.0,786.0C1139.0,791.7 1136.0,809.3 1134.0,820.0C1132.0,830.7 1130.3,839.0 1128.0,850.0C1125.7,861.0 1121.3,880.0 1120.0,886.0" fill="none" stroke="#333" stroke-width="8" stroke-linecap="round" filter="url(#b2)"/>
<path d="M600.0,1028.8C604.4,1032.9 617.4,1041.7 626.6,1053.2C635.9,1064.7 647.2,1084.8 655.5,1097.6C663.8,1110.4 673.1,1124.4 676.6,1129.8" fill="none" stroke="#3e3e3e" stroke-width="7" stroke-linecap="round" filter="url(#b2)"/>
<path d="M744.3,1031.0C746.8,1035.5 755.5,1048.8 759.8,1057.6C764.0,1066.5 768.1,1079.8 769.8,1084.3" fill="none" stroke="#4a4a4a" stroke-width="6" stroke-linecap="round" filter="url(#b2)"/>
<path d="M728.7,1097.6C730.9,1100.6 738.0,1109.8 742.0,1115.3C746.1,1120.9 751.3,1128.3 753.1,1130.9" fill="none" stroke="#3e3e3e" stroke-width="5" stroke-linecap="round" filter="url(#b2)"/>
<path d="M932.9,999.9C931.8,1003.6 932.5,1014.0 926.2,1022.1C919.9,1030.3 905.1,1039.9 895.2,1048.8C885.2,1057.6 873.7,1066.5 866.3,1075.4C858.9,1084.3 853.4,1097.6 850.8,1102.0" fill="none" stroke="#484848" stroke-width="6" stroke-linecap="round" filter="url(#b2)"/>
<path d="M850.8,1102.0C851.9,1105.7 855.8,1118.3 857.4,1124.2C859.1,1130.1 860.2,1135.3 860.8,1137.5" fill="none" stroke="#4a4a4a" stroke-width="4" stroke-linecap="round" filter="url(#b2)"/>
<path d="M1010.6,1046.6C1006.5,1049.9 995.4,1056.9 986.2,1066.5C976.9,1076.1 963.2,1094.5 955.1,1104.3C946.9,1114.1 940.3,1121.8 937.3,1125.3" fill="none" stroke="#3c3c3c" stroke-width="8" stroke-linecap="round" filter="url(#b2)"/>
<path d="M688.8,977.8C691.7,982.2 700.6,995.1 706.5,1004.4C712.4,1013.6 717.6,1022.9 724.3,1033.2C730.9,1043.6 742.8,1061.0 746.5,1066.5" fill="none" stroke="#5a5a5a" stroke-width="5" stroke-linecap="round" filter="url(#b2)"/>
<path d="M966.2,977.8C962.8,981.5 952.5,993.3 946.2,999.9C939.9,1006.6 931.4,1014.7 928.5,1017.7" fill="none" stroke="#4a4a4a" stroke-width="6" stroke-linecap="round" filter="url(#b2)"/>
<ellipse cx="676.6" cy="970.0" rx="11.1" ry="11.1" fill="#dcdcdc" filter="url(#b2)"/>
<ellipse cx="701.0" cy="997.7" rx="4.4" ry="5.3" fill="#e8e8e8" filter="url(#b1)"/>
<ellipse cx="948.4" cy="984.4" rx="7.5" ry="15.5" fill="#d0d0d0" transform="rotate(25 948.4 984.4)" filter="url(#b2)"/>
<g filter="url(#b1)" fill="none" stroke="#fff" stroke-linejoin="round">
<path d="M685.4,1125.3L724.3,1138.7L755.3,1137.5L763.1,1148.6L733.2,1149.1L688.8,1148.6L682.6,1140.2Z" stroke-width="5.5" fill="#9a9a9a"/>
<path d="M840.8,1145.3L888.5,1140.2L928.0,1131.3L925.8,1150.4L888.5,1152.6L855.2,1155.3Z" stroke-width="5.5" fill="#9a9a9a"/>
<path d="M763.1,1159.7L790.9,1169.7L821.9,1169.7L846.8,1156.4L850.3,1173.0L839.7,1181.9L777.5,1183.0L764.7,1177.5Z" stroke-width="5" fill="#a0a0a0"/>
</g>
<g filter="url(#b1)">
<path d="M764.2,1137.5C765.9,1134.4 767.6,1127.1 777.5,1125.3C787.5,1123.6 830.1,1121.7 838.6,1124.2C847.0,1126.7 841.8,1140.9 840.8,1144.2C839.8,1147.5 832.7,1149.2 830.8,1148.6C828.9,1148.0 829.6,1141.5 826.4,1139.8C823.1,1138.0 812.0,1135.3 806.4,1135.3C800.8,1135.3 788.0,1137.7 784.2,1139.8C780.4,1141.8 780.1,1149.7 777.5,1150.9C775.0,1152.0 767.1,1150.4 765.3,1148.6C763.6,1146.9 762.6,1140.6 764.2,1137.5Z" fill="#fff"/>
<path d="M802.0,1074.3C803.2,1072.2 807.6,1077.3 810.8,1079.8C814.1,1082.4 823.6,1089.5 826.4,1093.2C829.1,1096.8 833.0,1104.8 831.2,1106.9C829.5,1109.0 817.0,1110.6 813.0,1109.1C809.1,1107.7 803.0,1100.5 801.5,1095.8C800.0,1091.2 800.7,1076.4 802.0,1074.3Z" fill="#fff"/>
<path d="M724.3,1137.5L755.3,1150.9L790.9,1169.7" stroke="#fff" stroke-width="4.5" fill="none"/>
<path d="M888.5,1140.9L855.2,1155.3L821.9,1169.7" stroke="#fff" stroke-width="4.5" fill="none"/>
</g>
<ellipse cx="804.2" cy="1150.9" rx="22.2" ry="11.5" fill="#707070" filter="url(#b2)"/>
<ellipse cx="800.8" cy="1148.6" rx="1.8" ry="10.0" fill="#222" filter="url(#b1)"/>
<path d="M790.0,1222.0L800.0,1205.0L810.0,1222.0L800.0,1243.0Z" fill="#777" filter="url(#b2)"/>
</g>
<path d="M316.7,1105.0C330.4,1111.7 367.4,1129.7 398.7,1145.2C430.0,1160.7 469.2,1184.4 504.5,1198.0C539.8,1211.6 575.1,1218.8 610.4,1227.0C645.7,1235.2 677.9,1243.0 716.2,1247.0C754.5,1251.0 808.4,1251.2 840.0,1251.0C871.6,1250.8 877.2,1249.7 905.8,1245.7C934.4,1241.7 976.3,1236.0 1011.6,1227.2C1046.9,1218.4 1082.2,1205.2 1117.5,1192.8C1152.8,1180.4 1185.4,1165.3 1223.3,1153.0C1261.2,1140.7 1324.7,1124.4 1345.0,1118.7" fill="none" stroke="#6a6a6a" stroke-width="1.3"/>
<path d="M374.9,1223.2C380.6,1224.4 387.7,1225.4 409.3,1230.5C430.9,1235.6 471.0,1246.8 504.5,1253.7C538.0,1260.7 575.1,1267.3 610.4,1272.2C645.7,1277.1 677.9,1280.9 716.2,1283.3C754.5,1285.7 808.4,1287.0 840.0,1286.7C871.6,1286.4 877.2,1284.3 905.8,1281.4C934.4,1278.5 976.3,1274.1 1011.6,1269.5C1046.9,1264.9 1091.0,1257.9 1117.5,1253.7C1144.0,1249.5 1148.4,1249.2 1170.4,1244.4C1192.4,1239.6 1227.7,1230.8 1249.7,1224.6C1271.7,1218.4 1293.8,1210.3 1302.6,1207.4" fill="none" stroke="#fff" stroke-width="3.2" stroke-linecap="round"/>
<path d="M409.3,1230.5C425.2,1234.4 471.0,1246.8 504.5,1253.7C538.0,1260.7 575.1,1267.3 610.4,1272.2C645.7,1277.1 677.9,1280.9 716.2,1283.3C754.5,1285.7 808.4,1287.0 840.0,1286.7C871.6,1286.4 877.2,1284.3 905.8,1281.4C934.4,1278.5 976.3,1274.1 1011.6,1269.5C1046.9,1264.9 1091.0,1257.9 1117.5,1253.7C1144.0,1249.5 1161.6,1246.0 1170.4,1244.4" fill="none" stroke="#fff" stroke-width="5.2" stroke-linecap="round" filter="url(#b1)"/>
<ellipse cx="412" cy="1230" rx="9" ry="4" fill="#fff" transform="rotate(14 412 1230)"/>
<ellipse cx="1168" cy="1244" rx="10" ry="4" fill="#fff" transform="rotate(-13 1168 1244)"/>
<rect x="584" y="1411" width="496" height="2" fill="#8a8a8a"/>
<g fill="none" stroke="#d33651" stroke-width="3.4">
<circle cx="741.6" cy="856.4" r="11.8"/><circle cx="763.8" cy="1013.3" r="11.8"/>
<path d="M741.6,856.4 L763.8,1013.3" stroke-width="3.2"/>
</g>
</svg>
<!-- logo -->
<svg style="left:10px;top:15px;filter:drop-shadow(2px 2px 1.500px rgba(0,0,0,.5))" width="160" height="75" viewBox="0 0 2268 1063"><path fill="#9d1f37" d="M365,548 C520,530 700,470 790,370 C840,310 845,240 800,200 C760,160 700,150 650,158 C520,175 380,270 290,400 C220,500 185,560 185,630 C185,740 260,865 410,865 C560,865 690,770 770,680 L795,735 L825,565 L680,600 L722,640 C620,740 520,800 420,800 C320,800 262,720 262,610 C262,500 340,390 450,310 C520,260 600,235 660,235 C730,235 765,265 745,320 C720,390 620,450 375,525 Z"/></svg>
<!-- cogs -->
<svg style="left:1887px;top:39px" width="37" height="29.600" viewBox="0 0 640 512"><path fill="#9b9ea1" d="M512.100 191l-8.200 14.300c-3 5.300-9.400 7.500-15.100 5.400-11.800-4.400-22.600-10.700-32.100-18.600-4.600-3.800-5.800-10.500-2.800-15.700l8.200-14.300c-6.900-8-12.300-17.300-15.900-27.400h-16.500c-6 0-11.200-4.300-12.200-10.300-2-12-2.100-24.600 0-37.100 1-6 6.200-10.400 12.200-10.400h16.500c3.600-10.100 9-19.400 15.900-27.400l-8.200-14.300c-3-5.200-1.900-11.900 2.800-15.700 9.500-7.900 20.400-14.200 32.100-18.600 5.700-2.100 12.100.1 15.100 5.400l8.200 14.300c10.500-1.900 21.200-1.900 31.700 0L552 6.300c3-5.300 9.400-7.500 15.100-5.400 11.800 4.400 22.600 10.700 32.100 18.600 4.600 3.800 5.800 10.500 2.800 15.700l-8.200 14.300c6.900 8 12.300 17.300 15.900 27.400h16.500c6 0 11.200 4.300 12.200 10.300 2 12 2.100 24.600 0 37.100-1 6-6.200 10.400-12.200 10.400h-16.500c-3.600 10.100-9 19.400-15.900 27.400l8.200 14.300c3 5.200 1.900 11.900-2.800 15.700-9.500 7.900-20.400 14.200-32.100 18.600-5.700 2.100-12.100-.1-15.100-5.400l-8.200-14.300c-10.400 1.900-21.200 1.900-31.700 0zm-10.500-58.800c38.500 29.600 82.400-14.300 52.800-52.800-38.500-29.700-82.400 14.300-52.800 52.800zM386.300 286.100l33.700 16.800c10.100 5.800 14.500 18.100 10.500 29.100-8.900 24.200-26.400 46.400-42.600 65.800-7.400 8.900-20.200 11.100-30.300 5.300l-29.100-16.800c-16 13.700-34.600 24.600-54.900 31.700v33.600c0 11.600-8.300 21.600-19.700 23.600-24.600 4.200-50.400 4.400-75.900 0-11.500-2-20-11.900-20-23.600V418c-20.300-7.200-38.900-18-54.900-31.700L74 403c-10 5.800-22.900 3.600-30.300-5.300-16.200-19.400-33.300-41.600-42.200-65.700-4-10.900.4-23.200 10.500-29.100l33.300-16.800c-3.900-20.900-3.900-42.400 0-63.400L12 205.800c-10.100-5.800-14.600-18.100-10.500-29 8.900-24.200 26-46.400 42.200-65.800 7.400-8.900 20.200-11.100 30.300-5.300l29.100 16.800c16-13.700 34.600-24.600 54.900-31.700V57.100c0-11.500 8.200-21.500 19.600-23.500 24.600-4.200 50.500-4.400 76-.1 11.500 2 20 11.900 20 23.600v33.600c20.300 7.200 38.900 18 54.900 31.700l29.100-16.800c10-5.800 22.900-3.600 30.300 5.300 16.200 19.400 33.200 41.600 42.100 65.800 4 10.900.1 23.200-10 29.100l-33.700 16.800c3.900 21 3.900 42.500 0 63.500zm-117.600 21.100c59.200-77-28.700-164.900-105.700-105.700-59.200 77 28.700 164.900 105.700 105.700zm243.400 182.700l-8.200 14.300c-3 5.300-9.400 7.500-15.100 5.400-11.800-4.400-22.600-10.700-32.100-18.600-4.600-3.800-5.800-10.500-2.800-15.700l8.200-14.300c-6.900-8-12.300-17.300-15.900-27.400h-16.500c-6 0-11.200-4.300-12.200-10.300-2-12-2.100-24.600 0-37.100 1-6 6.200-10.400 12.200-10.400h16.500c3.600-10.100 9-19.400 15.900-27.400l-8.200-14.300c-3-5.200-1.900-11.900 2.800-15.700 9.500-7.900 20.400-14.200 32.100-18.600 5.700-2.100 12.100.1 15.100 5.400l8.200 14.300c10.500-1.900 21.200-1.900 31.700 0l8.200-14.300c3-5.300 9.400-7.500 15.100-5.400 11.800 4.400 22.600 10.700 32.100 18.600 4.600 3.800 5.800 10.500 2.800 15.700l-8.200 14.300c6.900 8 12.300 17.300 15.900 27.400h16.500c6 0 11.200 4.300 12.200 10.300 2 12 2.100 24.600 0 37.100-1 6-6.200 10.400-12.200 10.400h-16.500c-3.600 10.100-9 19.400-15.900 27.400l8.200 14.300c3 5.200 1.900 11.900-2.800 15.700-9.500 7.900-20.400 14.200-32.100 18.600-5.700 2.100-12.100-.1-15.100-5.400l-8.200-14.300c-10.400 1.900-21.200 1.900-31.700 0zM501.600 431c38.500 29.600 82.400-14.300 52.800-52.800-38.500-29.600-82.400 14.300-52.800 52.800z"/></svg>
<!-- info -->
<svg style="left:1952px;top:36px" width="36" height="36" viewBox="0 0 512 512"><path fill="#9b9ea1" d="M256 8C119 8 8 119.100 8 256c0 137 111 248 248 248s248-111 248-248C504 119.100 393 8 256 8zm0 110c23.200 0 42 18.800 42 42s-18.800 42-42 42-42-18.800-42-42 18.800-42 42-42zm56 254c0 6.600-5.400 12-12 12h-88c-6.600 0-12-5.400-12-12v-24c0-6.600 5.400-12 12-12h12v-64h-12c-6.600 0-12-5.400-12-12v-24c0-6.600 5.400-12 12-12h64c6.600 0 12 5.400 12 12v100h12c6.600 0 12 5.400 12 12v24z"/></svg>

<!-- ===== toolbar row 1 ===== -->
<!-- select -->
<svg style="left:36px;top:162px" width="20" height="32" viewBox="0 0 320 512"><path fill="#7d2137" d="M302.200 329.100H196.100l55.800 136c3.900 9.400-.6 20-9.400 24l-49.200 21.400c-9.200 4-19.400-.6-23.300-9.700l-53.100-129.100-86.700 89.100C18.700 472.800 0 463.600 0 448V18.300C0 1.900 19.900-6.100 30.300 5.400l284.400 292.500c11.500 11.200 3.100 31.200-12.500 31.200z"/></svg>
<!-- levels: feather sun -->
<svg style="left:108px;top:162px" width="32" height="32" viewBox="0 0 24 24" fill="none" stroke="#fff" stroke-width="2" stroke-linecap="round" stroke-linejoin="round"><circle cx="12" cy="12" r="5"/><line x1="12" y1="1" x2="12" y2="3"/><line x1="12" y1="21" x2="12" y2="23"/><line x1="4.220" y1="4.220" x2="5.640" y2="5.640"/><line x1="18.360" y1="18.360" x2="19.780" y2="19.780"/><line x1="1" y1="12" x2="3" y2="12"/><line x1="21" y1="12" x2="23" y2="12"/><line x1="4.220" y1="19.780" x2="5.640" y2="18.360"/><line x1="18.360" y1="5.640" x2="19.780" y2="4.220"/></svg>
<!-- presets: feather sunset -->
<svg style="left:190px;top:162px" width="32" height="32" viewBox="0 0 24 24" fill="none" stroke="#fff" stroke-width="2" stroke-linecap="round" stroke-linejoin="round"><path d="M17 18a5 5 0 0 0-10 0"/><line x1="12" y1="9" x2="12" y2="2"/><line x1="4.220" y1="10.220" x2="5.640" y2="11.640"/><line x1="1" y1="18" x2="3" y2="18"/><line x1="21" y1="18" x2="23" y2="18"/><line x1="18.360" y1="11.640" x2="19.780" y2="10.220"/><line x1="23" y1="22" x2="1" y2="22"/><polyline points="16 5 12 9 8 5"/></svg>
<!-- zoom: feather zoom-in -->
<svg style="left:270px;top:162px" width="32" height="32" viewBox="0 0 24 24" fill="none" stroke="#fff" stroke-width="2" stroke-linecap="round" stroke-linejoin="round"><circle cx="11" cy="11" r="8"/><line x1="21" y1="21" x2="16.650" y2="16.650"/><line x1="11" y1="8" x2="11" y2="14"/><line x1="8" y1="11" x2="14" y2="11"/></svg>
<!-- invert: fa adjust -->
<svg style="left:340px;top:162px" width="32" height="32" viewBox="0 0 512 512"><path fill="#fff" d="M8 256c0 137 111 248 248 248s248-111 248-248S393 8 256 8 8 119 8 256zm248 184V72c101.700 0 184 82.300 184 184 0 101.700-82.300 184-184 184z"/></svg>
<!-- reset: md loop -->
<svg style="left:410px;top:162px" width="32" height="32" viewBox="0 0 24 24"><path fill="#fff" d="M12 4V1L8 5l4 4V6c3.310 0 6 2.690 6 6 0 1.010-.25 1.970-.7 2.800l1.460 1.460C19.540 15.030 20 13.570 20 12c0-4.420-3.580-8-8-8zm0 14c-3.310 0-6-2.690-6-6 0-1.010.25-1.970.7-2.800L5.240 7.740C4.460 8.970 4 10.430 4 12c0 4.420 3.580 8 8 8v3l4-4-4-4v3z"/></svg>
<!-- pan: fa hand-paper -->
<svg style="left:482px;top:162px" width="28" height="32" viewBox="0 0 448 512"><path fill="#fff" d="M408.800 128.900c-21.900-.1-39.700 18.400-39.700 40.300V256h-8V72.700c0-21.900-17.800-40.400-39.700-40.300-22 .1-39.800 18-39.800 40V256h-8V40.700C273.600 18.800 255.800.3 233.900.4 211.900.5 194.100 18.400 194.100 40.400V256h-8V73.100c0-21.900-17.800-40.400-39.700-40.300-22 .1-39.800 18-39.800 40v233.500l-35.800-49.200c-13-17.900-38-21.800-55.900-8.800-17.900 13-21.800 38-8.800 55.900l125.600 172.700A48 48 0 0 0 170.500 496h208.200c22.300 0 41.600-15.300 46.700-37l22-93.500a96 96 0 0 0 2.500-22V168.900c0-22-17.900-39.900-41.100-40z"/><path d="M190.100 70V256M277.600 40V256M365.100 70V256" stroke="#272b30" stroke-width="20" fill="none"/></svg>
<!-- metadata: fa list-alt -->
<svg style="left:570px;top:162px" width="32" height="32" viewBox="0 0 512 512"><path fill="#fff" d="M464 480H48c-26.500 0-48-21.500-48-48V80c0-26.500 21.500-48 48-48h416c26.500 0 48 21.500 48 48v352c0 26.500-21.500 48-48 48zM128 120c-22.100 0-40 17.900-40 40s17.900 40 40 40 40-17.900 40-40-17.900-40-40-40zm0 96c-22.100 0-40 17.900-40 40s17.900 40 40 40 40-17.900 40-40-17.900-40-40-40zm0 96c-22.100 0-40 17.900-40 40s17.900 40 40 40 40-17.900 40-40-17.900-40-40-40zm288-136v-32c0-6.600-5.400-12-12-12H204c-6.600 0-12 5.400-12 12v32c0 6.600 5.400 12 12 12h200c6.600 0 12-5.400 12-12zm0 96v-32c0-6.600-5.400-12-12-12H204c-6.600 0-12 5.400-12 12v32c0 6.600 5.400 12 12 12h200c6.600 0 12-5.400 12-12zm0 96v-32c0-6.600-5.400-12-12-12H204c-6.600 0-12 5.400-12 12v32c0 6.600 5.400 12 12 12h200c6.600 0 12-5.400 12-12z"/></svg>
<!-- rotate: feather rotate-cw -->
<svg style="left:666px;top:162px" width="32" height="32" viewBox="0 0 24 24" fill="none" stroke="#fff" stroke-width="2" stroke-linecap="round" stroke-linejoin="round"><polyline points="23 4 23 10 17 10"/><path d="M20.490 15a9 9 0 1 1-2.120-9.360L23 10"/></svg>
<!-- region: fa list-alt -->
<svg style="left:746px;top:162px" width="32" height="32" viewBox="0 0 512 512"><path fill="#fff" d="M464 480H48c-26.500 0-48-21.500-48-48V80c0-26.500 21.500-48 48-48h416c26.500 0 48 21.500 48 48v352c0 26.500-21.500 48-48 48zM128 120c-22.100 0-40 17.900-40 40s17.900 40 40 40 40-17.900 40-40-17.900-40-40-40zm0 96c-22.100 0-40 17.900-40 40s17.900 40 40 40 40-17.900 40-40-17.900-40-40-40zm0 96c-22.100 0-40 17.900-40 40s17.900 40 40 40 40-17.900 40-40-17.900-40-40-40zm288-136v-32c0-6.600-5.400-12-12-12H204c-6.600 0-12 5.400-12 12v32c0 6.600 5.400 12 12 12h200c6.600 0 12-5.400 12-12zm0 96v-32c0-6.600-5.400-12-12-12H204c-6.600 0-12 5.400-12 12v32c0 6.600 5.400 12 12 12h200c6.600 0 12-5.400 12-12zm0 96v-32c0-6.600-5.400-12-12-12H204c-6.600 0-12 5.400-12 12v32c0 6.600 5.400 12 12 12h200c6.600 0 12-5.400 12-12z"/></svg>
<!-- color: fa palette -->
<svg style="left:822px;top:162px" width="32" height="32" viewBox="0 0 512 512"><path fill="#fff" d="M204.300 5C104.900 24.400 24.800 104.300 5.200 203.400c-37 187 131.700 326.400 258.800 306.700 41.200-6.400 61.400-54.600 42.500-91.700-23.100-45.400 9.900-98.400 60.900-98.400h79.700c35.800 0 64.800-29.600 64.900-65.300C511.500 97.100 368.100-26.900 204.300 5zM96 320c-17.700 0-32-14.300-32-32s14.300-32 32-32 32 14.300 32 32-14.300 32-32 32zm32-128c-17.700 0-32-14.300-32-32s14.300-32 32-32 32 14.300 32 32-14.300 32-32 32zm128-64c-17.700 0-32-14.300-32-32s14.300-32 32-32 32 14.300 32 32-14.300 32-32 32zm128 64c-17.700 0-32-14.300-32-32s14.300-32 32-32 32 14.300 32 32-14.300 32-32 32z"/></svg>
<!-- fusion: object-ungroup like -->
<svg style="left:895.700px;top:164.900px" width="33" height="27" viewBox="0 0 33 27"><g fill="#fff"><rect x="11.200" y="9.500" width="19.200" height="14.500"/><rect x="28.700" y="7.500" width="4" height="4" rx=".7"/><rect x="28.700" y="22.200" width="4" height="4" rx=".7"/><rect x="9.100" y="22.200" width="4" height="4" rx=".7"/></g><g fill="#fff" stroke="#272b30" stroke-width="1.300" paint-order="stroke"><path d="M2.300 2.300H21.300V16.400H2.300z"/><rect x="0" y="0" width="4" height="4" rx=".7"/><rect x="19.400" y="0" width="4" height="4" rx=".7"/><rect x="0" y="14.600" width="4" height="4" rx=".7"/><rect x="19.400" y="14.600" width="4" height="4" rx=".7"/></g><path d="M2.300 2.300H21.300V16.400H2.300z" fill="#fff"/></svg>
<!-- play: fa play-circle -->
<svg style="left:970px;top:162px" width="32" height="32" viewBox="0 0 512 512"><path fill="#fff" d="M256 8C119 8 8 119 8 256s111 248 248 248 248-111 248-248S393 8 256 8zm115.700 272l-176 101c-15.800 8.800-35.700-2.500-35.700-21V152c0-18.400 19.800-29.800 35.700-21l176 107c16.400 9.200 16.400 32.900 0 42z"/></svg>
<!-- point -->
<svg style="left:1040.500px;top:154px" width="32" height="32" viewBox="0 0 32 32" fill="none" stroke="#fff" stroke-width="1.400"><circle cx="16" cy="16" r="11.500"/><path d="M16 .8v8 M16 23.200v8 M.8 16h8 M23.200 16h8 M13.300 13.300l5.400 5.400 M18.700 13.300l-5.400 5.400"/></svg>
<!-- line: fa ruler-horizontal -->
<svg style="left:1110px;top:162px" width="32" height="32" viewBox="0 0 576 512"><path fill="#fff" d="M544 128h-48v88c0 4.400-3.600 8-8 8h-16c-4.400 0-8-3.600-8-8v-88h-64v88c0 4.400-3.600 8-8 8h-16c-4.400 0-8-3.600-8-8v-88h-64v88c0 4.400-3.600 8-8 8h-16c-4.400 0-8-3.600-8-8v-88h-64v88c0 4.400-3.600 8-8 8h-16c-4.400 0-8-3.600-8-8v-88h-64v88c0 4.400-3.600 8-8 8H88c-4.400 0-8-3.600-8-8v-88H32c-17.700 0-32 14.300-32 32v192c0 17.700 14.300 32 32 32h512c17.700 0 32-14.300 32-32V160c0-17.700-14.300-32-32-32z"/></svg>
<!-- circle -->
<svg style="left:1181px;top:154px" width="32" height="32" viewBox="0 0 32 32"><circle cx="16" cy="16" r="14.200" fill="none" stroke="#fff" stroke-width="1.500"/><circle cx="16" cy="16" r="2.700" fill="#fff"/></svg>
<!-- perpendicular -->
<svg style="left:1294px;top:154px" width="32" height="32" viewBox="0 0 32 32" fill="none" stroke="#d0d0d0" stroke-width="1.500"><path d="M16 0v32 M0 16h32"/><rect x="9.800" y="9.800" width="12.400" height="12.400"/></svg>
<!-- poly -->
<svg style="left:1450px;top:154px" width="32" height="32" viewBox="0 0 32 32" fill="none" stroke="#e0e0e0" stroke-width="1.100"><path d="M5.400 9.100 L16.800 4.500 L27.400 5.700 L28.500 16 L26.200 27.700 L5.400 27.700 Z"/><g fill="#272b30"><circle cx="5.400" cy="9.100" r="1.500"/><circle cx="16.800" cy="4.500" r="1.500"/><circle cx="27.400" cy="5.700" r="1.500" fill="#999"/><circle cx="28.500" cy="16" r="1.500"/><circle cx="26.200" cy="27.700" r="1.500"/><circle cx="5.400" cy="27.700" r="1.500"/></g></svg>
<!-- sculpt 2D -->
<svg style="left:1586px;top:162px" width="32" height="32" viewBox="0 0 32 32"><g fill="#fff"><path d="M.600 25.500 L9.200 16.900 Q12.500 14.600 15 17.500 Q17.600 20.600 15.600 22.600 L6.900 31.400 Q5.400 32.600 3.900 31.300 L.500 28 Q-.600 26.700 .600 25.500z"/><path d="M15.100 15.100 L19.900 9.900 L22.100 12 L17.500 16.900z"/><path d="M19.900 9.900 L19.900 5.600 L27.300 .400 Q27.900 0 28.500 .500 L31.700 3.400 Q32.200 3.900 31.800 4.500 L26.300 12 L22.100 12z"/></g></svg>

<!-- ===== toolbar row 2 ===== -->
<!-- sculpt 3D -->
<svg style="left:46px;top:244px" width="32" height="32" viewBox="0 0 32 32"><g fill="#fff"><path d="M.600 25.500 L9.200 16.900 Q12.500 14.600 15 17.500 Q17.600 20.600 15.600 22.600 L6.900 31.400 Q5.400 32.600 3.900 31.300 L.500 28 Q-.600 26.700 .600 25.500z"/><path d="M15.100 15.100 L19.900 9.900 L22.100 12 L17.500 16.900z"/><path d="M19.900 9.900 L19.900 5.600 L27.300 .400 Q27.900 0 28.500 .500 L31.700 3.400 Q32.200 3.900 31.800 4.500 L26.300 12 L22.100 12z"/></g></svg>
<!-- eraser -->
<svg style="left:140px;top:244px" width="32" height="32" viewBox="0 0 512 512"><path fill="#fff" d="M497.900 273.900c18.700-18.700 18.700-49.100 0-67.900l-160-160c-18.700-18.700-49.100-18.700-67.900 0l-256 256c-18.700 18.700-18.700 49.100 0 67.900l96 96A48 48 0 0 0 144 480h356c6.600 0 12-5.400 12-12v-40c0-6.600-5.400-12-12-12H355.900l142-142.100zm-302.600-62.600l137.400 137.400L265.400 416H150.600l-80-80 124.700-124.700z"/></svg>
<!-- brush -->
<svg style="left:205px;top:230px" width="120" height="52" viewBox="0 0 2268 983"><g fill="#fff"><path d="M338,468 C430,370 640,180 780,128 C760,230 560,440 432,552z"/><path d="M322,498 C370,510 400,550 402,590 C400,650 320,700 186,700 C225,650 215,560 250,522 C270,503 300,495 322,498z"/><path d="M2097,312 L2148,364 L1930,552 L1880,498z"/><path d="M1784,490 L1832,450 L1956,590 L1905,630z"/><path d="M1790,530 L1862,640 C1850,760 1700,820 1525,815 C1540,760 1580,720 1625,650 L1550,680 C1590,590 1680,535 1790,530z"/></g></svg>
<!-- spherical gated: dot-circle -->
<svg style="left:412px;top:244px" width="32" height="32" viewBox="0 0 512 512"><path fill="#fff" d="M256 8C119 8 8 119 8 256s111 248 248 248 248-111 248-248S393 8 256 8zm80 248c0 44.100-35.900 80-80 80s-80-35.900-80-80 35.900-80 80-80 80 35.900 80 80z"/></svg>
<!-- auto gated broom -->
<svg style="left:483.300px;top:230px" width="120" height="52" viewBox="0 0 2268 983"><g fill="#fff"><path d="M2097,312 L2148,364 L1930,552 L1880,498z"/><path d="M1784,490 L1832,450 L1956,590 L1905,630z"/><path d="M1790,530 L1862,640 C1850,760 1700,820 1525,815 C1540,760 1580,720 1625,650 L1550,680 C1590,590 1680,535 1790,530z"/></g></svg>
<!-- spherical: egg -->
<svg style="left:687px;top:246px" width="22" height="28" viewBox="0 0 384 512"><path fill="#fff" d="M192 0C86 0 0 214 0 320s86 192 192 192 192-86 192-192S298 0 192 0z"/></svg>
<!-- circle scissors -->
<div class="a" style="left:818.300px;top:244.400px;width:31.400px;height:31.400px;border-radius:50%;background:#fff"></div>

<!-- right panel -->
<div class="a" style="left:1670px;top:148px;width:598px;height:1294px;background:#3a3e44"></div>
<div class="a" style="left:1670px;top:280px;width:2px;height:598px;background:#565a5f"></div>
<div class="a" style="left:1670px;top:876px;width:598px;height:2px;background:#4b4f55"></div>
<!-- collapse button -->
<div class="a" style="left:1670px;top:148px;width:52px;height:44px;background:#efefef;border:4px solid;border-color:#767676 #212325 #212325 #767676"></div>
<svg style="left:1686.5px;top:162.5px" width="27" height="27" viewBox="0 0 512 512"><path fill="#000" d="M256 8c137 0 248 111 248 248S393 504 256 504 8 393 8 256 119 8 256 8zm-28.900 143.600l75.500 72.400H120c-13.300 0-24 10.700-24 24v16c0 13.300 10.700 24 24 24h182.600l-75.500 72.400c-9.700 9.300-9.900 24.800-.4 34.300l11 10.900c9.400 9.400 24.600 9.400 33.900 0L404.300 273c9.400-9.400 9.400-24.600 0-33.900L271.600 106.300c-9.400-9.400-24.600-9.400-33.900 0l-11 10.900c-9.500 9.600-9.300 25.100 .4 34.400z"/></svg>
<!-- accordion header -->
<div class="a" style="left:1670px;top:200px;width:598px;height:80px;background:#7d2138;box-sizing:border-box;border:2px solid #943a50;border-right:none"></div>
<svg style="left:2231px;top:234px" width="18" height="12" viewBox="0 0 18 12"><path d="M2.500 9.800 L9 3.300 L15.500 9.800" fill="none" stroke="#fff" stroke-width="2.600"/></svg>
<!-- toggles -->
<div class="a" style="left:2102px;top:308px;width:72px;height:30px;border-radius:15px;background:#9bd3f8"></div>
<div class="a" style="left:2136px;top:300px;width:44px;height:44px;border-radius:50%;background:#3e88d4;box-shadow:0 3px 4px rgba(0,0,0,.35),0 1px 8px rgba(0,0,0,.25)"></div>
<div class="a" style="left:2102px;top:376px;width:72px;height:30px;border-radius:15px;background:#9bd3f8"></div>
<div class="a" style="left:2136px;top:368px;width:44px;height:44px;border-radius:50%;background:#3e88d4;box-shadow:0 3px 4px rgba(0,0,0,.35),0 1px 8px rgba(0,0,0,.25)"></div>
<div class="a" style="left:2102px;top:444px;width:72px;height:30px;border-radius:15px;background:#9bd3f8"></div>
<div class="a" style="left:2136px;top:436px;width:44px;height:44px;border-radius:50%;background:#3e88d4;box-shadow:0 3px 4px rgba(0,0,0,.35),0 1px 8px rgba(0,0,0,.25)"></div>
<!-- scroll tracks -->
<div class="a" style="left:2228px;top:504px;width:20px;height:224px;background:#33373b"></div>
<div class="a" style="left:1692px;top:728px;width:536px;height:20px;background:#33373b"></div>
<div class="a" style="left:2228px;top:728px;width:20px;height:20px;background:#fff"></div>
<!-- annotation card -->
<div class="a" style="left:1720px;top:504px;width:480px;height:200px;box-sizing:border-box;border:2px solid #d33651;border-radius:26px;background:#7d1c2e;overflow:hidden"><div style="height:72px;background:#d33651"></div></div>
<svg style="left:1732px;top:537px" width="26" height="16" viewBox="0 0 26 16"><path d="M2.200 14 L13 2.200 L23.800 14 Z" fill="#000" stroke="#000" stroke-width="2.400" stroke-linejoin="round"/></svg>
<!-- edit -->
<svg style="left:2089px;top:528px" width="32" height="29" viewBox="0 0 576 512"><path fill="#000" d="M402.600 83.200l90.200 90.200c3.800 3.800 3.800 10 0 13.800L274.400 405.600l-92.800 10.300c-12.400 1.400-22.900-9.100-21.500-21.500l10.300-92.800L388.800 83.200c3.800-3.800 10-3.800 13.800 0zm162-22.900l-48.800-48.800c-15.200-15.200-39.900-15.200-55.200 0l-35.400 35.400c-3.800 3.800-3.800 10 0 13.800l90.200 90.200c3.800 3.800 10 3.800 13.800 0l35.400-35.400c15.200-15.300 15.200-40 0-55.200zM384 346.200V448H64V128h229.800c3.200 0 6.200-1.300 8.500-3.500l40-40c7.600-7.600 2.200-20.500-8.500-20.500H48C21.500 64 0 85.500 0 112v352c0 26.500 21.500 48 48 48h352c26.500 0 48-21.500 48-48V306.200c0-10.700-12.900-16-20.500-8.500l-40 40c-2.200 2.300-3.500 5.300-3.500 8.500z"/></svg>
<!-- trash -->
<svg style="left:2127px;top:528px" width="26" height="29.500" viewBox="0 0 448 512"><path fill="#000" d="M32 464a48 48 0 0 0 48 48h288a48 48 0 0 0 48-48V128H32zm272-256a16 16 0 0 1 32 0v224a16 16 0 0 1-32 0zm-96 0a16 16 0 0 1 32 0v224a16 16 0 0 1-32 0zm-96 0a16 16 0 0 1 32 0v224a16 16 0 0 1-32 0zM432 32H312l-9.400-18.700A24 24 0 0 0 281.100 0H166.800a23.700 23.700 0 0 0-21.400 13.300L136 32H16A16 16 0 0 0 0 48v32a16 16 0 0 0 16 16h416a16 16 0 0 0 16-16V48a16 16 0 0 0-16-16z"/></svg>
<!-- eye -->
<svg style="left:2161px;top:530px" width="29" height="26" viewBox="0 0 576 512"><path fill="#000" d="M288 144a110.900 110.900 0 0 0-31.200 5 55.400 55.400 0 0 1 7.200 27 56 56 0 0 1-56 56 55.400 55.400 0 0 1-27-7.200A111.700 111.700 0 1 0 288 144zm284.500 97.400C518.300 135.600 410.900 64 288 64S57.700 135.600 3.500 241.400a32.400 32.400 0 0 0 0 29.200C57.700 376.400 165.100 448 288 448s230.300-71.600 284.500-177.400a32.400 32.400 0 0 0 0-29.200zM288 400c-98.700 0-189.100-55-237.900-144C98.900 167 189.300 112 288 112s189.100 55 237.900 144C477.100 345 386.700 400 288 400z"/></svg>
<!-- bottom strip -->
<div class="a" style="left:0;top:1440px;width:2268px;height:2px;background:#2d2f33"></div>
<!-- hr -->
<div class="a" style="left:1734px;top:834px;width:472px;height:2px;background:#2b2e32"></div>

<!-- text -->
<div id="tx">
<span class="t sh" style="font-size:30.0px;line-height:35px;color:#ffffff;left:80.30px;top:31px;letter-spacing:0.333px;">ePAD</span>
<span class="t sh" style="font-size:31.5px;line-height:37px;color:#9b9ea1;left:195.60px;top:33px;letter-spacing:0.04px;">Search</span>
<span class="t sh" style="font-size:31.5px;line-height:37px;color:#ffffff;left:321.50px;top:33px;letter-spacing:0.133px;">Display</span>
<span class="t sh" style="font-size:32.0px;line-height:37px;color:#9b9ea1;left:450.80px;top:33px;letter-spacing:0.083px;">Reports</span>
<span class="t sh" style="font-size:30.5px;line-height:36px;color:#9b9ea1;left:588.00px;top:33px;letter-spacing:0.233px;">Flex</span>
<span class="t sh" style="font-size:31.5px;line-height:37px;color:#9b9ea1;left:2015.60px;top:33px;letter-spacing:0.05px;">Admin</span>
<span class="t sh" style="font-size:32.5px;line-height:38px;color:#9b9ea1;left:2132.30px;top:32px;letter-spacing:0.0px;">Logout</span>
<span class="t" style="font-size:23.5px;line-height:28px;color:#7d2137;left:9.40px;top:200px;letter-spacing:0.24px;font-weight:700;">Select</span>
<span class="t" style="font-size:22.5px;line-height:26px;color:#ffffff;left:90.50px;top:202px;letter-spacing:0.0px;">Levels</span>
<span class="t" style="font-size:23.5px;line-height:28px;color:#ffffff;left:165.80px;top:200px;letter-spacing:0.067px;">Presets</span>
<span class="t" style="font-size:23.0px;line-height:27px;color:#ffffff;left:257.30px;top:201px;letter-spacing:-0.2px;">Zoom</span>
<span class="t" style="font-size:23.5px;line-height:28px;color:#ffffff;left:324.75px;top:200px;letter-spacing:0.3px;">Invert</span>
<span class="t" style="font-size:22.5px;line-height:26px;color:#ffffff;left:396.10px;top:202px;letter-spacing:-0.05px;">Reset</span>
<span class="t" style="font-size:22.0px;line-height:26px;color:#ffffff;left:476.80px;top:202px;letter-spacing:0.0px;">Pan</span>
<span class="t" style="font-size:23.0px;line-height:27px;color:#ffffff;left:534.95px;top:201px;letter-spacing:0.186px;">MetaData</span>
<span class="t" style="font-size:23.5px;line-height:28px;color:#ffffff;left:646.00px;top:200px;letter-spacing:-0.04px;">Rotate</span>
<span class="t" style="font-size:22.5px;line-height:26px;color:#ffffff;left:725.70px;top:202px;letter-spacing:0.12px;">Region</span>
<span class="t" style="font-size:23.5px;line-height:28px;color:#ffffff;left:808.75px;top:200px;letter-spacing:0.125px;">Color</span>
<span class="t" style="font-size:23.0px;line-height:27px;color:#ffffff;left:876.45px;top:201px;letter-spacing:0.3px;">Fusion</span>
<span class="t" style="font-size:22.0px;line-height:26px;color:#ffffff;left:965.00px;top:202px;letter-spacing:0.0px;">Play</span>
<span class="t" style="font-size:23.5px;line-height:28px;color:#ffffff;left:1028.90px;top:200px;letter-spacing:0.1px;">Point</span>
<span class="t" style="font-size:23.0px;line-height:27px;color:#ffffff;left:1103.90px;top:201px;letter-spacing:0.4px;">Line</span>
<span class="t" style="font-size:23.5px;line-height:28px;color:#ffffff;left:1166.55px;top:200px;letter-spacing:0.1px;">Circle</span>
<span class="t" style="font-size:23.5px;line-height:28px;color:#ffffff;left:1235.70px;top:200px;letter-spacing:0.05px;">Perpendicular</span>
<span class="t" style="font-size:23.0px;line-height:27px;color:#ffffff;left:1391.00px;top:201px;letter-spacing:0.117px;">Poly/Freehand</span>
<span class="t" style="font-size:23.5px;line-height:28px;color:#ffffff;left:1551.00px;top:200px;letter-spacing:0.125px;">Sculpt 2D</span>
<span class="t" style="font-size:23.5px;line-height:28px;color:#ffffff;left:9.40px;top:282px;letter-spacing:0.225px;">Sculpt 3D</span>
<span class="t" style="font-size:22.5px;line-height:26px;color:#ffffff;left:123.00px;top:284px;letter-spacing:0.12px;">Eraser</span>
<span class="t" style="font-size:23.5px;line-height:28px;color:#ffffff;left:199.00px;top:282px;letter-spacing:0.35px;">Brush</span>
<span class="t" style="font-size:23.5px;line-height:28px;color:#ffffff;left:270.50px;top:282px;letter-spacing:-0.05px;">Gated</span>
<span class="t" style="font-size:23.5px;line-height:28px;color:#ffffff;left:343.40px;top:282px;letter-spacing:0.0px;">Spherical Gated</span>
<span class="t" style="font-size:23.0px;line-height:27px;color:#ffffff;left:522.10px;top:283px;letter-spacing:0.089px;">Auto Gated</span>
<span class="t" style="font-size:23.5px;line-height:28px;color:#ffffff;left:649.05px;top:282px;letter-spacing:0.037px;">Spherical</span>
<span class="t" style="font-size:23.5px;line-height:28px;color:#ffffff;left:756.40px;top:282px;letter-spacing:0.029px;">Circle Scissors</span>
<span class="t" style="font-size:24.5px;line-height:29px;color:#dedede;left:45.00px;top:413px;letter-spacing:0.609px;">TCGA-09-1667</span>
<span class="t" style="font-size:24.5px;line-height:29px;color:#dedede;left:45.00px;top:449px;letter-spacing:0.609px;">TCGA-09-1667</span>
<span class="t" style="font-size:30.5px;line-height:36px;color:#ffffff;left:833.60px;top:381px;letter-spacing:0px;">A</span>
<span class="t" style="font-size:30.5px;line-height:36px;color:#ffffff;left:12.80px;top:889px;letter-spacing:0px;">R</span>
<span class="t" style="font-size:24.0px;line-height:28px;color:#dedede;left:1432.30px;top:414px;letter-spacing:-0.023px;">CT ABD PELV EN</span>
<span class="t" style="font-size:24.5px;line-height:29px;color:#dedede;left:1389.70px;top:449px;letter-spacing:0.226px;">Apr 3, 1995 10:52:14</span>
<span class="t" style="font-size:24.5px;line-height:29px;color:#dedede;left:43.40px;top:1253px;letter-spacing:0.14px;">Ser: 2</span>
<span class="t" style="font-size:24.5px;line-height:29px;color:#dedede;left:42.40px;top:1289px;letter-spacing:0.85px;">Img: 58 58/76</span>
<span class="t" style="font-size:24.5px;line-height:29px;color:#dedede;left:43.40px;top:1325px;letter-spacing:-0.05px;">512 x 512</span>
<span class="t" style="font-size:24.5px;line-height:29px;color:#dedede;left:42.40px;top:1361px;letter-spacing:0.766px;">Loc: -296.46 mm Thick: 5.00 mm</span>
<span class="t" style="font-size:24.5px;line-height:29px;color:#dedede;left:43.40px;top:1396px;letter-spacing:-0.16px;">5MM HELICAL</span>
<span class="t" style="font-size:24.5px;line-height:29px;color:#dedede;left:1484.60px;top:1325px;letter-spacing:0.022px;">Zoom: 107%</span>
<span class="t" style="font-size:24.5px;line-height:29px;color:#dedede;left:1478.40px;top:1361px;letter-spacing:0.582px;">W: 400 L: 40</span>
<span class="t" style="font-size:24.5px;line-height:29px;color:#dedede;left:1334.40px;top:1396px;letter-spacing:0.427px;">Lossless / Uncompressed</span>
<span class="t" style="font-size:25.5px;line-height:30px;color:#a6a8aa;left:1205.60px;top:328px;letter-spacing:-0.1px;">Slice #</span>
<span class="t" style="font-size:25.5px;line-height:30px;color:#757575;left:1302.00px;top:328px;letter-spacing:0.0px;">58</span>
<span class="t" style="font-size:25.5px;line-height:30px;color:#ffffff;left:1693.00px;top:224px;letter-spacing:0.0px;">Annotations</span>
<span class="t" style="font-size:29.5px;line-height:34px;color:#9e9e9e;left:1719.80px;top:307px;letter-spacing:-0.062px;">Show Calculations</span>
<span class="t" style="font-size:29.5px;line-height:34px;color:#9e9e9e;left:1719.30px;top:375px;letter-spacing:-0.043px;">Show All Labels</span>
<span class="t" style="font-size:29.5px;line-height:34px;color:#9e9e9e;left:1719.30px;top:443px;letter-spacing:0.253px;">Show All Annotations</span>
<span class="t" style="font-size:24.0px;line-height:28px;color:#ffffff;left:1731.70px;top:590px;letter-spacing:0.507px;">firm_bat  -  ROI</span>
<span class="t ul" style="font-size:24.0px;line-height:28px;color:#ffffff;left:1729.70px;top:626px;letter-spacing:0.714px;font-weight:700;font-style:italic;">TWODIMENSIONMULTIPOINT</span>
<span class="t" style="font-size:24.0px;line-height:28px;color:#ffffff;left:1729.70px;top:662px;letter-spacing:0.858px;">Length:51.869</span>
<span class="t" style="font-size:29.0px;line-height:34px;color:#9e9e9e;left:1757.50px;top:785px;letter-spacing:0.211px;font-weight:700;">Other aims in series</span>
<span class="t ann" style="font-size:24.0px;line-height:28px;color:#d33651;left:794.30px;top:996px;letter-spacing:0.057px;">51.87 mm</span>
</div>
</body>
</html>
